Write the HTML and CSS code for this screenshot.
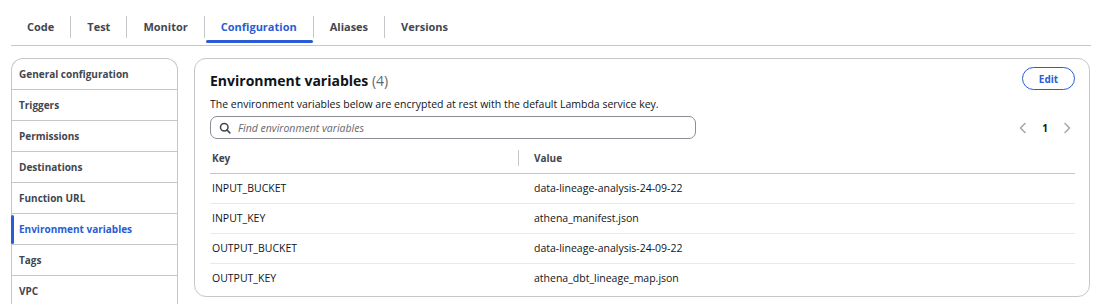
FILE: index.html
```html
<!DOCTYPE html>
<html lang="en">
<head>
<meta charset="utf-8">
<title>Configuration</title>
<link rel="stylesheet" href="styles.css">
</head>
<body>
<div class="tabs">
  <div class="tab">Code</div>
  <div class="tab">Test</div>
  <div class="tab">Monitor</div>
  <div class="tab active">Configuration</div>
  <div class="tab">Aliases</div>
  <div class="tab">Versions</div>
</div>
<div class="layout">
  <nav class="side">
    <div class="side-item">General configuration</div>
    <div class="side-item">Triggers</div>
    <div class="side-item">Permissions</div>
    <div class="side-item">Destinations</div>
    <div class="side-item">Function URL</div>
    <div class="side-item active">Environment variables</div>
    <div class="side-item">Tags</div>
    <div class="side-item">VPC</div>
  </nav>
  <section class="panel">
    <div class="panel-head">
      <h2 class="title">Environment variables <span class="count">(4)</span></h2>
      <button class="btn">Edit</button>
    </div>
    <p class="desc">The environment variables below are encrypted at rest with the default Lambda service key.</p>
    <div class="tools">
      <div class="search">
        <svg class="search-icon" width="12" height="12" viewBox="0 0 16 16"><circle cx="7" cy="7" r="5" fill="none" stroke="#424650" stroke-width="2"/><path d="M10.5 10.5 L14.5 14.5" stroke="#424650" stroke-width="2" stroke-linecap="round"/></svg>
        <span class="placeholder">Find environment variables</span>
      </div>
      <div class="pager">
        <svg width="8" height="12" viewBox="0 0 8 12"><path d="M6 1.5 L1.5 6 L6 10.5" fill="none" stroke="#a4a4ad" stroke-width="1.5" stroke-linecap="round" stroke-linejoin="round"/></svg>
        <span class="page">1</span>
        <svg width="8" height="12" viewBox="0 0 8 12"><path d="M2 1.5 L6.5 6 L2 10.5" fill="none" stroke="#a4a4ad" stroke-width="1.5" stroke-linecap="round" stroke-linejoin="round"/></svg>
      </div>
    </div>
    <table class="table">
      <thead>
        <tr><th class="col-key">Key</th><th class="col-val"><span class="th-sep"></span>Value</th></tr>
      </thead>
      <tbody>
        <tr><td class="col-key">INPUT_BUCKET</td><td class="col-val">data-lineage-analysis-24-09-22</td></tr>
        <tr><td class="col-key">INPUT_KEY</td><td class="col-val">athena_manifest.json</td></tr>
        <tr><td class="col-key">OUTPUT_BUCKET</td><td class="col-val">data-lineage-analysis-24-09-22</td></tr>
        <tr><td class="col-key">OUTPUT_KEY</td><td class="col-val">athena_dbt_lineage_map.json</td></tr>
      </tbody>
    </table>
  </section>
</div>
</body>
</html>
```

FILE: styles.css
```css
* { box-sizing: border-box; }
html, body { margin: 0; padding: 0; background: #fff; }
body {
  font-family: "Open Sans", "Noto Sans", Arial, sans-serif;
  color: #0f141a;
  font-size: 10px;
  overflow: hidden;
  height: 304px;
}

.tabs {
  display: flex;
  margin: 0 11px;
  padding-top: 16px;
  border-bottom: 1px solid #c6c6cd;
}
.tab {
  position: relative;
  height: 22px;
  line-height: 22px;
  padding: 0 16px;
  margin-bottom: 7px;
  font-weight: 700;
  font-size: 11px;
  color: #424650;
}
.tab + .tab { border-left: 1px solid #c6c6cd; }
.tab.active { color: #295cd6; }
.tab.active::after {
  content: "";
  position: absolute;
  left: 1px;
  right: 0;
  bottom: -5px;
  height: 3px;
  border-radius: 2px;
  background: #295cd6;
}

.layout {
  display: flex;
  align-items: flex-start;
  gap: 16px;
  margin: 12px 12px 0 11px;
}

.side {
  width: 167px;
  flex: none;
  border: 1px solid #c6c6cd;
  border-bottom: 0;
  border-radius: 12px 12px 0 0;
}
.side-item {
  position: relative;
  height: 31px;
  line-height: 30px;
  padding-left: 7px;
  font-size: 10px;
  font-weight: 700;
  color: #424650;
  border-top: 1px solid #c6c6cd;
}
.side-item:first-child { border-top: 0; height: 30px; }
.side-item.active { color: #295cd6; }
.side-item.active::before {
  content: "";
  position: absolute;
  left: -1px;
  top: 1px;
  bottom: 0;
  width: 3px;
  border-radius: 2px;
  background: #295cd6;
}

.panel {
  flex: 1;
  border: 1px solid #c6c6cd;
  border-radius: 12px;
  padding: 9px 14px 3px 15px;
}
.panel-head {
  display: flex;
  align-items: center;
  justify-content: space-between;
  height: 22px;
}
.title {
  margin: 0;
  font-size: 14px;
  font-weight: 700;
  color: #0f141a;
  padding-top: 3px;
}
.count { font-weight: 400; color: #656871; }
.btn {
  width: 53px;
  height: 23px;
  margin-top: -1px;
  border: 1px solid #295cd6;
  border-radius: 12px;
  background: #fff;
  color: #295cd6;
  font-family: inherit;
  font-weight: 700;
  font-size: 10px;
  padding: 0;
}
.desc {
  margin: 7px 0 0;
  font-size: 10.5px;
  line-height: 14px;
  color: #0f141a;
}
.tools {
  display: flex;
  align-items: center;
  justify-content: space-between;
  margin-top: 5px;
}
.search {
  display: flex;
  align-items: center;
  width: 486px;
  height: 23px;
  border: 1px solid #8c8c94;
  border-radius: 7px;
  padding-left: 8px;
}
.search-icon { margin-right: 7px; }
.placeholder {
  font-style: italic;
  font-size: 10.5px;
  color: #656871;
}
.pager {
  display: flex;
  align-items: center;
  gap: 15px;
  margin-right: 4px;
}
.page { font-size: 10px; font-weight: 700; color: #0f141a; }

.table {
  width: 100%;
  border-collapse: collapse;
  margin-top: 4px;
}
.table th, .table td {
  text-align: left;
  padding: 0;
}
.table th {
  height: 30px;
  font-size: 10px;
  font-weight: 700;
  color: #424650;
  border-bottom: 1px solid #c6c6cd;
  vertical-align: middle;
}
.table td {
  height: 30px;
  font-size: 10.5px;
  color: #0f141a;
  border-bottom: 1px solid #e9e9ed;
}
.table tbody tr:last-child td { border-bottom: 0; }
.col-key { width: 308px; padding-left: 2px !important; }
.col-val { padding-left: 16px !important; position: relative; }
.th-sep {
  position: absolute;
  left: 0;
  top: 7px;
  height: 16px;
  border-left: 1px solid #c6c6cd;
}
```
